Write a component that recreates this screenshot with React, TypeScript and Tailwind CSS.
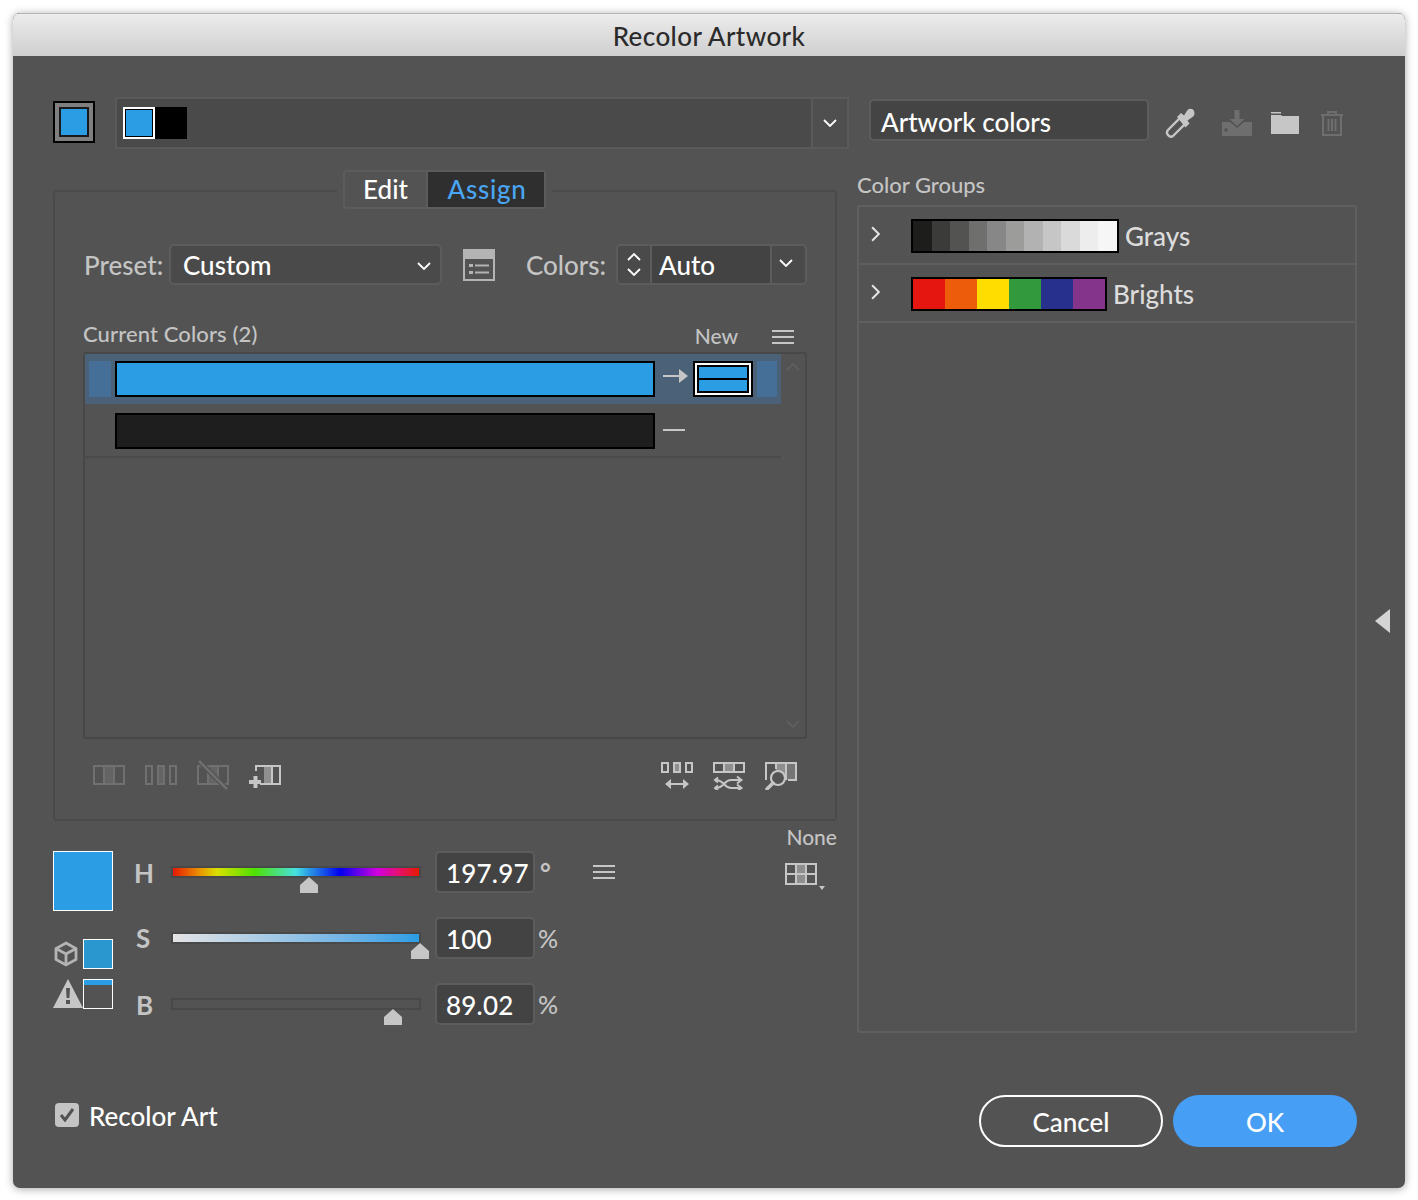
const BLUE = '#2a9de4';

const Chevron = ({ dir = 'down', className = '' }: { dir?: 'down' | 'up' | 'right'; className?: string }) => {
  const d = dir === 'down' ? 'M1 1l6 6 6-6' : dir === 'up' ? 'M1 7l6-6 6 6' : 'M1 1l6 6-6 6';
  const box = dir === 'right' ? '0 0 8 14' : '0 0 14 8';
  return (
    <svg viewBox={box} className={className} fill="none" stroke="currentColor" strokeWidth="1.8">
      <path d={d} />
    </svg>
  );
};

const MenuIcon = ({ className = '' }: { className?: string }) => (
  <div className={`flex w-[22px] flex-col gap-[4px] ${className}`}>
    <div className="h-[2px] bg-[#c6c6c6]" />
    <div className="h-[2px] bg-[#c6c6c6]" />
    <div className="h-[2px] bg-[#c6c6c6]" />
  </div>
);

const Eyedropper = () => (
  <svg viewBox="0 0 30 30" className="h-[30px] w-[30px]" fill="none">
    <path d="M3.500 27.500c-2-1.500-2-3.500-.5-5.500L15 10l5.500 5.500L8.500 27.500c-1.500 1.500-3.500 1.500-5 0z" stroke="#c6c6c6" strokeWidth="2.400" />
    <path d="M12 9l4-4 3 2.500 3.500-5.500c2-2 5.500-1.500 6.500 1s.5 5-1.500 6l-5 3.500 2 3-4 4z" fill="#c6c6c6" />
  </svg>
);

const DownloadIcon = () => (
  <svg viewBox="0 0 30 26" className="h-[26px] w-[30px]" fill="#6e6e6e">
    <path d="M0 12h8l7 6 7-6h8v14H0z" />
    <path d="M12.500 0h5v9h5l-7.500 7-7.500-7h5z" />
    <circle cx="4" cy="20" r="1.800" fill="#535353" />
  </svg>
);

const FolderIcon = () => (
  <svg viewBox="0 0 28 22" className="h-[22px] w-[28px]" fill="#c6c6c6">
    <rect x="0" y="0" width="10" height="1.500" />
    <path d="M0 3h10l1 1h17v18H0z" />
  </svg>
);

const TrashIcon = () => (
  <svg viewBox="0 0 24 26" className="h-[26px] w-[24px]" fill="none" stroke="#6e6e6e" strokeWidth="2">
    <path d="M1 5h22M8 5V2h8v3M3 5v20h18V5M8.500 9v12M12 9v12M15.500 9v12" />
  </svg>
);

const PresetIcon = () => (
  <svg viewBox="0 0 32 32" className="h-[32px] w-[32px]" fill="none">
    <rect x="1" y="1" width="30" height="30" stroke="#b4b4b4" strokeWidth="2" />
    <rect x="0" y="0" width="32" height="10" fill="#b4b4b4" />
    <path d="M6 15h4v3H6zM6 22h4v3H6z" fill="#b4b4b4" />
    <path d="M12 16.500h14M12 23.500h14" stroke="#b4b4b4" strokeWidth="2" />
  </svg>
);

const CellsIcon = ({ mid, line }: { mid: string; line: string }) => (
  <>
    <rect x="1" y="6" width="30" height="18" stroke={line} strokeWidth="2" fill="none" />
    <rect x="11" y="6" width="10" height="18" fill={mid} stroke={line} strokeWidth="2" />
  </>
);

const BarIcon1 = () => (
  <svg viewBox="0 0 32 30" className="h-[30px] w-[32px]">
    <CellsIcon mid="#646464" line="#707070" />
  </svg>
);

const BarIcon2 = () => (
  <svg viewBox="0 0 32 30" className="h-[30px] w-[32px]" fill="none" stroke="#707070" strokeWidth="2">
    <rect x="1" y="6" width="6" height="18" />
    <rect x="13" y="6" width="6" height="18" fill="#646464" />
    <rect x="25" y="6" width="6" height="18" />
  </svg>
);

const BarIcon3 = () => (
  <svg viewBox="0 0 32 30" className="h-[30px] w-[32px]">
    <CellsIcon mid="#646464" line="#707070" />
    <path d="M2 1l28 28" stroke="#535353" strokeWidth="5" />
    <path d="M2 1l28 28" stroke="#707070" strokeWidth="2.500" />
  </svg>
);

const BarIcon4 = () => (
  <svg viewBox="0 0 32 30" className="h-[30px] w-[32px]" fill="none">
    <path d="M7 11V6h8" stroke="#c6c6c6" strokeWidth="2" />
    <rect x="15" y="6" width="8" height="18" fill="#8f8f8f" />
    <path d="M10 6h21v18H11M23 6v18" stroke="#c6c6c6" strokeWidth="2" />
    <path d="M0 20h4.500v-4h4v4H12v4H8.500v4h-4v-4H0z" fill="#c6c6c6" />
  </svg>
);

const SpreadIcon = () => (
  <svg viewBox="0 0 32 30" className="h-[30px] w-[32px]" fill="none" stroke="#c6c6c6" strokeWidth="2">
    <rect x="1" y="3" width="6" height="9" />
    <rect x="13" y="3" width="6" height="9" fill="#8f8f8f" />
    <rect x="25" y="3" width="6" height="9" />
    <path d="M6 24h20" />
    <path d="M10 19l-6 5 6 5zM22 19l6 5-6 5z" fill="#c6c6c6" stroke="none" />
  </svg>
);

const ShuffleIcon = () => (
  <svg viewBox="0 0 32 30" className="h-[30px] w-[32px]" fill="none" stroke="#c6c6c6" strokeWidth="2">
    <rect x="1" y="3" width="30" height="9" />
    <rect x="11" y="3" width="10" height="9" fill="#8f8f8f" />
    <path d="M3 20c8 0 8 8 15 8h10M3 28c8 0 8-8 15-8h10" />
    <path d="M24 16.500l4.500 3.500-4.500 3.500M24 24.500l4.500 3.500-4.500 3.500" />
    <path d="M5 17.500l-3 2.500 3 2.500M5 25.500l-3 2.500 3 2.500" />
  </svg>
);

const FindIcon = () => (
  <svg viewBox="0 0 32 30" className="h-[30px] w-[32px]" fill="none" stroke="#c6c6c6" strokeWidth="2">
    <rect x="11" y="3" width="10" height="17" fill="#8f8f8f" stroke="none" />
    <rect x="21" y="3" width="10" height="17" fill="#767676" stroke="none" />
    <path d="M1 20V3h30v17h-8M11 3v6M21 3v17" />
    <circle cx="13" cy="18" r="7" fill="#535353" stroke="#c6c6c6" strokeWidth="2.200" />
    <path d="M8 23l-6 6" strokeWidth="3.500" strokeLinecap="round" />
  </svg>
);

const GridIcon = () => (
  <svg viewBox="0 0 40 28" className="h-[28px] w-[40px]" fill="none" stroke="#c6c6c6" strokeWidth="2">
    <rect x="11" y="1" width="11" height="20" fill="#8f8f8f" stroke="none" />
    <rect x="1" y="1" width="30" height="20" />
    <path d="M1 11h30M11 1v20M21 1v20" />
    <path d="M34 23h6l-3 4z" fill="#c6c6c6" stroke="none" />
  </svg>
);

const CubeIcon = () => (
  <svg viewBox="0 0 24 26" className="h-[26px] w-[24px]" fill="none" stroke="#b4b4b4" strokeWidth="2.800">
    <path d="M12 2l10 5.500v11L12 24 2 18.500v-11zM2 7.500l10 5.500 10-5.500M12 13v11" />
  </svg>
);

const WarnIcon = () => (
  <svg viewBox="0 0 30 30" className="h-[30px] w-[30px]">
    <path d="M15 0l15 29H0z" fill="#c6c6c6" />
    <path d="M13 9h4l-.6 10h-2.800zM13 21h4v4h-4z" fill="#535353" />
  </svg>
);

const Thumb = ({ className }: { className: string }) => (
  <svg viewBox="0 0 18 16" className={`absolute top-[9px] h-[16px] w-[18px] ${className}`} fill="#c6c6c6">
    <path d="M9 0l9 8v8H0V8z" />
  </svg>
);

const Slider = ({ bar, thumb }: { bar: string; thumb: string }) => (
  <div className="relative h-[12px] w-[250px] border-2 border-[#494949]">
    <div className={`h-full w-full ${bar}`} />
    <Thumb className={thumb} />
  </div>
);

const Field = ({ value }: { value: string }) => (
  <div className="flex h-[42px] w-[100px] items-center rounded-[5px] border-2 border-[#5c5c5c] bg-[#434343] pl-[9px] pt-[3px] text-[26px] tracking-[0.2px] text-white">
    {value}
  </div>
);

const grays = ['#1d1d1b', '#3b3b3a', '#535352', '#6f6f6e', '#878787', '#9c9c9b', '#b2b2b2', '#c6c6c6', '#dadada', '#ededed', '#f6f6f6'];
const brights = ['#e5150f', '#ec5c0b', '#ffdd00', '#329a3c', '#27318d', '#84358b'];

const GroupRow = ({ name, cells, width }: { name: string; cells: string[]; width: string }) => (
  <div className="flex h-[58px] items-center border-b-2 border-[#5f5f5f] pl-[12px]">
    <Chevron dir="right" className="mb-[2px] h-[16px] w-[9px] text-[#e4e4e4]" />
    <div className={`ml-[31px] mt-[2px] flex h-[34px] border-2 border-black ${width}`}>
      {cells.map((c) => (
        <div key={c} className="flex-1" style={{ background: c }} />
      ))}
    </div>
    <span className="ml-[6px] mt-[3px] text-[26px] font-medium text-[#dcdcdc]">{name}</span>
  </div>
);

export default function App() {
  return (
    <div className="min-h-[1200px] bg-white pl-[13px] pt-[13px] font-['Lato','Liberation_Sans',sans-serif] font-medium">
      <div className="flex h-[1175px] w-[1392px] flex-col overflow-hidden rounded-[7px] bg-[#535353] shadow-[0_1px_8px_rgba(0,0,0,0.35)]">
        <div className="flex h-[43px] shrink-0 items-center justify-center border-t border-[#b5b5b5] bg-gradient-to-b from-[#ececec] to-[#cfcfcf] pt-[2px] text-[26px] tracking-[0.4px] text-[#2b2b2b]">
          Recolor Artwork
        </div>

        <div className="flex flex-1 flex-col pl-[40px] pt-[41px]">
          {/* top bar */}
          <div className="flex h-[52px]">
            <div className="mt-[4px] flex h-[42px] w-[42px] items-center justify-center border-2 border-black bg-[#7f7f7f]">
              <div className="h-[30px] w-[30px] border-2 border-[#1a1a1a]" style={{ background: BLUE }} />
            </div>
            <div className="ml-[20px] flex h-[52px] w-[734px] border-2 border-[#5a5a5a] bg-[#4a4a4a]">
              <div className="ml-[6px] mt-[8px] flex h-[32px]">
                <div className="h-[32px] w-[32px] border-2 border-white outline outline-1 -outline-offset-3 outline-black" style={{ background: BLUE }} />
                <div className="h-[32px] w-[32px] bg-black" />
              </div>
              <div className="ml-auto flex w-[36px] items-center justify-center rounded-r-[4px] border-l-2 border-[#5a5a5a] bg-[#4f4f4f]">
                <Chevron className="h-[8px] w-[14px] text-white" />
              </div>
            </div>
            <div className="ml-[20px] mt-[2px] flex h-[42px] w-[280px] items-center rounded-[5px] border-2 border-[#5c5c5c] bg-[#444444] pl-[10px] pt-[4px] text-[26px] text-white">
              Artwork colors
            </div>
            <div className="ml-[16px] mt-[11px]">
              <Eyedropper />
            </div>
            <div className="ml-[27px] mt-[13px]">
              <DownloadIcon />
            </div>
            <div className="ml-[19px] mt-[15px]">
              <FolderIcon />
            </div>
            <div className="ml-[21px] mt-[13px]">
              <TrashIcon />
            </div>
          </div>

          <div className="mt-[21px] flex">
            {/* left column */}
            <div className="w-[784px]">
              <div className="pt-[20px]">
                <div className="relative h-[631px] rounded-[4px] border-2 border-[#4a4a4a] pl-[28px] pt-[52px]">
                  <div className="absolute left-[282px] top-[-22px] bg-[#535353] px-[6px]">
                    <div className="flex h-[39px] w-[203px] rounded-[4px] border-2 border-[#5c5c5c] text-[26px]">
                      <div className="flex w-[83px] items-center justify-center border-r-2 border-[#5c5c5c] text-white">Edit</div>
                      <div className="flex flex-1 items-center justify-center bg-[#2f2f2f] pl-[2px] tracking-[0.7px] text-[#4aa5f2]">Assign</div>
                    </div>
                  </div>

                  <div className="flex h-[41px] items-center pl-[1px] text-[26px]">
                    <span className="w-[85px] pt-[2px] text-[#c4c4c4]">Preset:</span>
                    <div className="flex h-[41px] w-[273px] items-center rounded-[5px] border-2 border-[#5c5c5c] bg-[#4a4a4a] pl-[12px] pt-[2px] text-white">
                      Custom
                      <Chevron className="ml-auto mr-[9px] h-[8px] w-[14px] text-white" />
                    </div>
                    <div className="ml-[21px]">
                      <PresetIcon />
                    </div>
                    <span className="ml-[31px] w-[90px] pt-[2px] text-[#c4c4c4]">Colors:</span>
                    <div className="flex h-[41px] w-[191px] rounded-[5px] border-2 border-[#5c5c5c] bg-[#4a4a4a] text-white">
                      <div className="flex w-[34px] flex-col items-center justify-center gap-[7px] border-r-2 border-[#5c5c5c]">
                        <Chevron dir="up" className="h-[8px] w-[14px]" />
                        <Chevron className="h-[8px] w-[14px]" />
                      </div>
                      <div className="flex w-[118px] items-center bg-[#434343] pl-[7px] pt-[2px]">Auto</div>
                      <div className="flex flex-1 items-center justify-center border-l-2 border-[#5c5c5c] pr-[5px]">
                        <Chevron className="mb-[3px] h-[8px] w-[14px]" />
                      </div>
                    </div>
                  </div>

                  <div className="mt-[37px] flex h-[30px] w-[724px] items-center pr-[13px] text-[22px] text-[#c4c4c4]">
                    <span className="mb-[8px] tracking-[0.12px]">Current Colors (2)</span>
                    <span className="mb-[2px] ml-auto mr-[34px] text-[21px]">New</span>
                    <MenuIcon />
                  </div>

                  <div className="flex h-[387px] w-[724px] rounded-[3px] border-2 border-[#484848]">
                    <div className="w-[696px]">
                      <div className="flex h-[50px] items-center bg-[#4a6177] pl-[4px]">
                        <div className="h-[36px] w-[22px] bg-[#466f97]" />
                        <div className="ml-[4px] h-[36px] w-[540px] border-2 border-black" style={{ background: BLUE }} />
                        <svg viewBox="0 0 26 14" className="mb-[6px] ml-[8px] h-[14px] w-[26px]">
                          <path d="M0 6h17v2H0z" fill="#c6c6c6" />
                          <path d="M16 0l9 7-9 7z" fill="#c6c6c6" />
                        </svg>
                        <div className="ml-[4px] flex h-[36px] w-[60px] flex-col border-2 border-black bg-white p-[2px]">
                          <div className="flex flex-1 flex-col border-2 border-black">
                            <div className="flex-1" style={{ background: BLUE }} />
                            <div className="h-[2px] bg-black" />
                            <div className="flex-1" style={{ background: BLUE }} />
                          </div>
                        </div>
                        <div className="ml-[4px] h-[36px] w-[20px] bg-[#466f97]" />
                      </div>
                      <div className="flex h-[54px] items-center border-b-2 border-[#4a4a4a] pl-[30px]">
                        <div className="mt-[2px] h-[36px] w-[540px] border-2 border-black bg-[#1e1e1e]" />
                        <div className="ml-[8px] h-[2px] w-[22px] bg-[#c6c6c6]" />
                      </div>
                    </div>
                    <div className="flex flex-1 flex-col items-center justify-between py-[9px] text-[#5f5f5f]">
                      <Chevron dir="up" className="h-[8px] w-[14px]" />
                      <Chevron className="h-[8px] w-[14px]" />
                    </div>
                  </div>

                  <div className="mt-[21px] flex w-[724px] items-center pl-[10px] pr-[10px]">
                    <BarIcon1 />
                    <div className="ml-[20px]"><BarIcon2 /></div>
                    <div className="ml-[20px]"><BarIcon3 /></div>
                    <div className="ml-[20px]"><BarIcon4 /></div>
                    <div className="ml-auto"><SpreadIcon /></div>
                    <div className="ml-[20px]"><ShuffleIcon /></div>
                    <div className="ml-[20px]"><FindIcon /></div>
                  </div>
                </div>
              </div>

              {/* hsb */}
              <div className="mt-[5px] flex">
                <div className="w-[60px] pt-[25px]">
                  <div className="h-[60px] w-[60px] border border-white" style={{ background: BLUE }} />
                  <div className="mt-[28px] flex h-[30px] items-center justify-between pl-[1px]">
                    <CubeIcon />
                    <div className="h-[30px] w-[30px] border border-white bg-[#2a98cf]" />
                  </div>
                  <div className="mt-[10px] flex h-[30px] items-center justify-between">
                    <WarnIcon />
                    <div className="h-[30px] w-[30px] border border-white">
                      <div className="h-[5px]" style={{ background: BLUE }} />
                    </div>
                  </div>
                </div>

                <div className="ml-[21px] flex flex-col gap-[24px] pt-[25px] text-[26px] text-[#c4c4c4]">
                  <div className="flex h-[42px] items-center">
                    <span className="w-[37px] pt-[2px] font-bold">H</span>
                    <Slider
                      bar="bg-[linear-gradient(to_right,#e61900,#e8a000_12%,#d8e000_18%,#50e000_33%,#45e0e0_50%,#2a9de4_55%,#0000f0_68%,#d000e0_83%,#e6106a_92%,#e61900)]"
                      thumb="left-[127px]"
                    />
                    <div className="ml-[14px]"><Field value="197.97" /></div>
                    <span className="ml-[5px] mt-[7px] w-[53px] self-start font-bold leading-[30px]">°</span>
                    <MenuIcon />
                  </div>
                  <div className="flex h-[42px] items-center">
                    <span className="w-[37px] pl-[2px] pt-[1px] font-bold">S</span>
                    <Slider bar="bg-gradient-to-r from-[#e4e4e4] to-[#2a9de4]" thumb="left-[238px]" />
                    <div className="ml-[14px]"><Field value="100" /></div>
                    <span className="ml-[3px] pt-[2px] text-[25px]">%</span>
                  </div>
                  <div className="flex h-[42px] items-center">
                    <span className="w-[37px] pl-[2px] pt-[3px] font-bold">B</span>
                    <Slider bar="" thumb="left-[211px]" />
                    <div className="ml-[14px]"><Field value="89.02" /></div>
                    <span className="ml-[3px] pt-[2px] text-[25px]">%</span>
                  </div>
                </div>

                <div className="ml-auto flex flex-col items-end">
                  <span className="text-[21px] leading-[21px] text-[#c4c4c4]">None</span>
                  <div className="mr-[12px] mt-[16px]">
                    <GridIcon />
                  </div>
                </div>
              </div>
            </div>

            {/* right column */}
            <div className="ml-[20px] w-[500px] pt-[2px]">
              <div className="h-[33px] text-[22px] leading-[26px] text-[#c4c4c4]">Color Groups</div>
              <div className="h-[828px] rounded-[3px] border-2 border-[#5f5f5f]">
                <GroupRow name="Grays" cells={grays} width="w-[208px]" />
                <GroupRow name="Brights" cells={brights} width="w-[196px]" />
              </div>
            </div>

            <svg viewBox="0 0 15 24" className="ml-[18px] mt-[439px] h-[24px] w-[15px]" fill="#d4d4d4">
              <path d="M15 0v24L0 12z" />
            </svg>
          </div>

          {/* footer */}
          <div className="mt-[62px] flex w-[1304px] items-start">
            <div className="ml-[2px] mt-[8px] flex h-[24px] w-[24px] items-center justify-center rounded-[4px] bg-[#c4c4c4]">
              <svg viewBox="0 0 16 14" className="h-[14px] w-[16px]" fill="none" stroke="#535353" strokeWidth="3">
                <path d="M2 7l4 5 8-11" />
              </svg>
            </div>
            <span className="ml-[10px] mt-[2px] text-[26px] text-white">Recolor Art</span>
            <button className="ml-auto h-[52px] w-[184px] rounded-full border-2 border-white pt-[2px] text-[26px] text-white">Cancel</button>
            <button className="ml-[10px] h-[52px] w-[184px] rounded-full bg-[#469ff5] pt-[2px] text-[26px] text-white">OK</button>
          </div>
        </div>
      </div>
    </div>
  );
}
